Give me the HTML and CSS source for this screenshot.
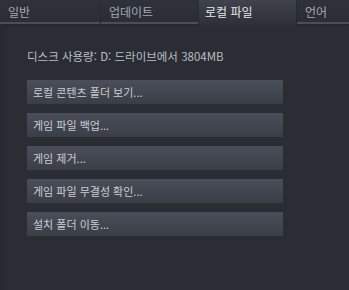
FILE: index.html
```html
<!DOCTYPE html>
<html lang="ko">
  <head>
    <meta charset="UTF-8" />
    <meta name="viewport" content="width=device-width, initial-scale=1.0" />
    <title>로컬 파일</title>
    <link rel="stylesheet" href="styles.css">
  </head>
  <body>
    <div class="tabs">
      <div class="tab tab-first">일반</div>
      <div class="tab">업데이트</div>
      <div class="tab active">로컬 파일</div>
      <div class="tab tab-last">언어</div>
    </div>
    <div class="panel">
      <div class="disk">디스크 사용량: D: 드라이브에서 3804MB</div>
      <div class="actions">
        <button class="action">로컬 콘텐츠 폴더 보기...</button>
        <button class="action">게임 파일 백업...</button>
        <button class="action">게임 제거...</button>
        <button class="action">게임 파일 무결성 확인...</button>
        <button class="action">설치 폴더 이동...</button>
      </div>
    </div>
  </body>
</html>
```

FILE: styles.css
```css
body {
  margin: 0;
  width: 349px;
  height: 290px;
  overflow: hidden;
  background: linear-gradient(90deg, #26292f 0, #2a2d34 10px);
  font-family: "Noto Sans CJK KR", "Noto Sans", Arial, sans-serif;
  font-size: 12px;
  color: #c4c8cf;
}
.tabs {
  display: flex;
  height: 26px;
  background: linear-gradient(180deg, #2b2e35 0%, #25272d 100%);
}
.tab {
  box-sizing: border-box;
  height: 24px;
  width: 97px;
  margin-right: 1px;
  padding: 4px 0 0 8px;
  color: #a4a8b0;
  background: linear-gradient(180deg, #2f323a 0%, #2a2d34 100%);
  border-bottom: 2px solid #4a4e57;
  line-height: 16px;
}
.tab-first {
  width: 100px;
}
.tab-last {
  flex: 1;
  margin-right: 0;
}
.active {
  height: 26px;
  padding-left: 6px;
  color: #e6e8eb;
  background: linear-gradient(180deg, #3f434c 0%, #2c2f36 100%);
  border-bottom: none;
}
.panel {
  padding: 22px 0 0 27px;
}
.disk {
  font-size: 11.5px;
  line-height: 17px;
  color: #b9bdc5;
}
.actions {
  display: flex;
  flex-direction: column;
  gap: 9px;
  margin-top: 15px;
}
.action {
  width: 256px;
  height: 24px;
  padding: 0 0 1px 6px;
  text-align: left;
  font-family: inherit;
  font-size: 11px;
  color: #c9cdd4;
  border: none;
  background: linear-gradient(180deg, #4a4e58 0%, #3a3e47 100%);
  cursor: pointer;
}
.action:hover {
  background: #525764;
}
```
